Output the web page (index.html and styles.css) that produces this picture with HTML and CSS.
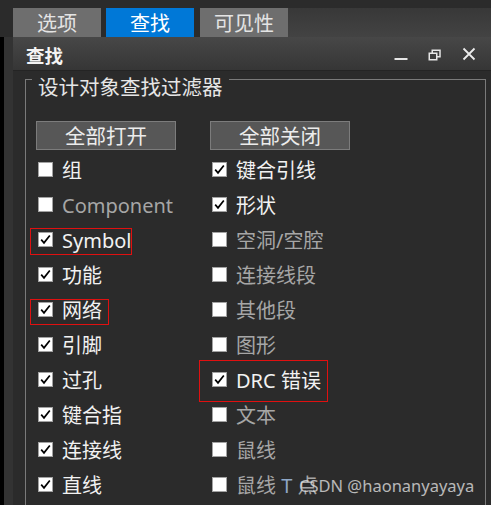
FILE: index.html
```html
<!DOCTYPE html>
<html lang="zh-CN">
<head>
<meta charset="utf-8">
<title>查找</title>
<link rel="stylesheet" href="styles.css">
</head>
<body>
<div class="app">
  <div class="tabs">
    <div class="tab">选项</div>
    <div class="tab active">查找</div>
    <div class="tab">可见性</div>
    <div class="tabfill"></div>
  </div>
  <div class="main">
    <div class="rail"></div>
    <div class="panel">
      <div class="hdr">
        <span class="title">查找</span>
        <div class="ctrls">
          <svg class="ico" viewBox="0 0 14 14" width="14" height="14"><rect x="0.5" y="11" width="13" height="2" fill="#e6e6e6"/></svg>
          <svg class="ico" viewBox="0 0 14 14" width="14" height="14"><rect x="1.25" y="6.25" width="7.5" height="6.5" fill="none" stroke="#e6e6e6" stroke-width="1.5"/><path d="M4.25 6 V3.25 H12 V9.75 H9" fill="none" stroke="#e6e6e6" stroke-width="1.5"/></svg>
          <svg class="ico" viewBox="0 0 14 14" width="14" height="14"><path d="M1.5 1.5 L12.5 12.5 M12.5 1.5 L1.5 12.5" stroke="#ececec" stroke-width="1.8" fill="none"/></svg>
        </div>
      </div>
      <div class="content">
        <div class="group">
          <div class="legend">设计对象查找过滤器</div>
          <div class="grid">
            <div class="btn">全部打开</div>
            <div class="btn">全部关闭</div>

            <div class="row"><span class="cb"></span><span class="lbl">组</span></div>
            <div class="row"><span class="cb on"></span><span class="lbl">键合引线</span></div>

            <div class="row"><span class="cb"></span><span class="lbl dis">Component</span></div>
            <div class="row"><span class="cb on"></span><span class="lbl">形状</span></div>

            <div class="row"><span class="cb on"></span><span class="lbl">Symbol</span></div>
            <div class="row"><span class="cb"></span><span class="lbl dis">空洞/空腔</span></div>

            <div class="row"><span class="cb on"></span><span class="lbl">功能</span></div>
            <div class="row"><span class="cb"></span><span class="lbl dis">连接线段</span></div>

            <div class="row"><span class="cb on"></span><span class="lbl">网络</span></div>
            <div class="row"><span class="cb"></span><span class="lbl dis">其他段</span></div>

            <div class="row"><span class="cb on"></span><span class="lbl">引脚</span></div>
            <div class="row"><span class="cb"></span><span class="lbl dis">图形</span></div>

            <div class="row"><span class="cb on"></span><span class="lbl">过孔</span></div>
            <div class="row"><span class="cb on"></span><span class="lbl">DRC 错误</span></div>

            <div class="row"><span class="cb on"></span><span class="lbl">键合指</span></div>
            <div class="row"><span class="cb"></span><span class="lbl dis">文本</span></div>

            <div class="row"><span class="cb on"></span><span class="lbl">连接线</span></div>
            <div class="row"><span class="cb"></span><span class="lbl dis">鼠线</span></div>

            <div class="row"><span class="cb on"></span><span class="lbl">直线</span></div>
            <div class="row"><span class="cb"></span><span class="lbl dis">鼠线 <span class="t">T</span> 点</span></div>
          </div>
          <div class="mark m1"></div>
          <div class="mark m2"></div>
          <div class="mark m3"></div>
        </div>
      </div>
    </div>
  </div>
  <div class="wm">CSDN @haonanyayaya</div>
</div>
</body>
</html>
```

FILE: styles.css
```css
html, body {
  margin: 0;
  padding: 0;
  background: #2b2b2b;
}
body {
  width: 491px;
  height: 505px;
  overflow: hidden;
  font-family: "Noto Sans", "Noto Sans CJK SC", sans-serif;
}
.app {
  position: relative;
  width: 491px;
  height: 505px;
  display: flex;
  flex-direction: column;
}
.tabs {
  flex: none;
  display: flex;
  height: 37px;
  padding-top: 8px;
  padding-left: 13px;
  box-sizing: border-box;
  background: #2b2b2b;
}
.tab {
  width: 88px;
  height: 29px;
  margin-right: 5px;
  background: #6e6e6e;
  color: #e4e4e4;
  font-family: "Noto Sans CJK SC", sans-serif;
  font-size: 20px;
  line-height: 29px;
  text-align: center;
}
.tab.active {
  background: #0078d7;
  color: #ffffff;
}
.tab:nth-child(2) { margin-right: 6px; }
.tabfill {
  flex: 1;
  margin-left: -5px;
  background: linear-gradient(#383838, #434343);
}
.main {
  flex: 1;
  display: flex;
  min-height: 0;
}
.rail {
  flex: none;
  width: 9px;
  border-left: 4px solid #000;
  background: #333333;
}
.panel {
  flex: 1;
  display: flex;
  flex-direction: column;
  min-height: 0;
}
.hdr {
  flex: none;
  height: 33px;
  border-bottom: 1px solid #242424;
  background: linear-gradient(#474747, #363636);
  display: flex;
  align-items: center;
  padding-left: 13px;
  padding-right: 15px;
}
.title {
  font-family: "Noto Sans CJK SC", sans-serif;
  font-weight: 700;
  font-size: 18.5px;
  color: #f4f4f4;
  line-height: 24px;
  margin-top: 3px;
}
.ctrls {
  margin-left: auto;
  display: flex;
  gap: 20px;
  align-items: center;
}
.ico { display: block; }
.content {
  flex: 1;
  min-height: 0;
  background: #2b2b2b;
  padding: 8px 5px 0 12px;
}
.group {
  position: relative;
  border: 1px solid #7a7a7a;
  border-bottom: none;
  height: 430px;
  padding-left: 10px;
}
.legend {
  width: fit-content;
  margin-top: -6px;
  margin-left: -4px;
  padding: 0 6px;
  background: #2b2b2b;
  color: #e6e6e6;
  font-family: "Noto Sans CJK SC", sans-serif;
  font-size: 20.5px;
  line-height: 24px;
}
.grid {
  display: grid;
  grid-template-columns: 174px 1fr;
  grid-template-rows: 31px;
  grid-auto-rows: 35px;
  margin-top: 23px;
}
.btn {
  grid-row: 1;
  width: 138px;
  height: 27px;
  align-self: start;
  border: 1px solid #7c7c7c;
  background: #575757;
  color: #ececec;
  font-family: "Noto Sans CJK SC", sans-serif;
  font-size: 20.5px;
  line-height: 27px;
  text-align: center;
}
.row {
  display: flex;
  align-items: center;
  height: 35px;
}
.cb {
  width: 13px;
  height: 13px;
  margin-left: 2px;
  margin-right: 9px;
  border: 1px solid #a2a2a2;
  background: #ffffff;
  flex: none;
}
.cb.on {
  background: #fff url("data:image/svg+xml;utf8,<svg xmlns='http://www.w3.org/2000/svg' viewBox='0 0 13 13'><path d='M2.2 6.6 L5 9.8 L10.8 2.4' fill='none' stroke='%23000' stroke-width='1.7'/></svg>") no-repeat center / 13px 13px;
}
.lbl {
  color: #f2f2f2;
  font-size: 20px;
  line-height: 28px;
  padding-top: 2px;
  white-space: nowrap;
}
.lbl.dis { color: #a6a6a6; }
.t { color: #8fa8c8; }
.mark {
  position: absolute;
  border: 1px solid #e01010;
}
.m1 { left: 4px; top: 148px; width: 100px; height: 25px; }
.m2 { left: 4px; top: 219px; width: 77px; height: 24px; }
.m3 { left: 173px; top: 280px; width: 127px; height: 40px; }
.wm {
  position: absolute;
  left: 299px;
  top: 475px;
  color: rgba(225, 225, 225, 0.78);
  font-family: "Noto Sans", sans-serif;
  font-size: 16.5px;
  line-height: 22px;
  white-space: nowrap;
}
```
